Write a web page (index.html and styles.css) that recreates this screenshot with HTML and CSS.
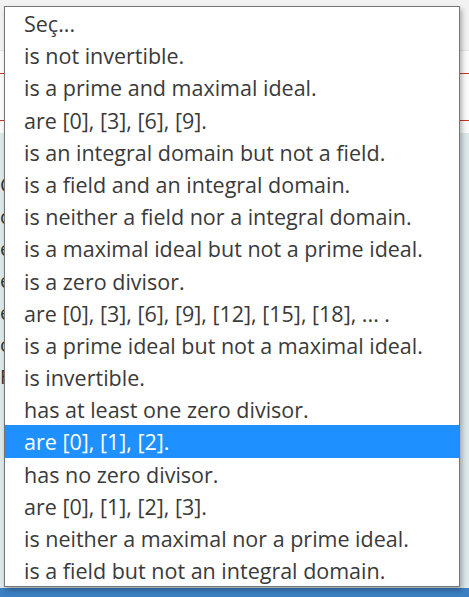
FILE: index.html
```html
<!DOCTYPE html>
<html lang="tr">
<head>
<meta charset="utf-8">
<link rel="stylesheet" href="styles.css">
</head>
<body>
<div class="page">
  <div class="topbar"></div>
  <div class="strip">
    <div class="rule"></div>
    <div class="rule"></div>
  </div>
  <div class="content">
    <p class="line">Cc</p>
    <p class="line">co</p>
    <p class="line">ee</p>
    <p class="line">ee</p>
    <p class="line">ee</p>
    <p class="line">oo</p>
    <p class="line">FF</p>
  </div>
  <div class="footer"><div class="btn"></div></div>
</div>

<div class="dropdown">
  <div class="opt">Seç...</div>
  <div class="opt">is not invertible.</div>
  <div class="opt">is a prime and maximal ideal.</div>
  <div class="opt">are [0], [3], [6], [9].</div>
  <div class="opt">is an integral domain but not a field.</div>
  <div class="opt">is a field and an integral domain.</div>
  <div class="opt">is neither a field nor a integral domain.</div>
  <div class="opt">is a maximal ideal but not a prime ideal.</div>
  <div class="opt">is a zero divisor.</div>
  <div class="opt">are [0], [3], [6], [9], [12], [15], [18], ... .</div>
  <div class="opt">is a prime ideal but not a maximal ideal.</div>
  <div class="opt">is invertible.</div>
  <div class="opt">has at least one zero divisor.</div>
  <div class="opt selected">are [0], [1], [2].</div>
  <div class="opt">has no zero divisor.</div>
  <div class="opt">are [0], [1], [2], [3].</div>
  <div class="opt">is neither a maximal nor a prime ideal.</div>
  <div class="opt">is a field but not an integral domain.</div>
</div>
</body>
</html>
```
FILE: styles.css
```css
html, body {
  margin: 0;
  padding: 0;
  width: 469px;
  height: 597px;
  overflow: hidden;
  font-family: "Open Sans", "Noto Sans", sans-serif;
}
.page {
  display: flex;
  flex-direction: column;
  height: 597px;
  background: #dde8eb;
}
.topbar {
  height: 50px;
  background: #f2f2f2;
  border-bottom: 1px solid #e4e4e4;
  flex: none;
}
.strip {
  height: 82px;
  background: #fbfbfb;
  flex: none;
  display: flex;
  flex-direction: column;
  padding-top: 22px;
  gap: 46px;
  box-sizing: border-box;
}
.rule {
  height: 1px;
  background: #c8341f;
}
.content {
  flex: 1;
  padding: 36px 0 0 0;
  display: flex;
  flex-direction: column;
}
.line {
  margin: 0;
  height: 32px;
  line-height: 32px;
  font-size: 20px;
  color: #333;
}
.footer {
  height: 9px;
  flex: none;
  display: flex;
}
.btn {
  width: 469px;
  background: #3c7fc2;
}
.dropdown {
  position: absolute;
  left: 4px;
  top: 6px;
  width: 454px;
  background: #fff;
  border: 1px solid #767676;
  box-shadow: 2px 3px 5px rgba(0, 0, 0, 0.3);
}
.opt {
  height: 32.2px;
  line-height: 31px;
  padding: 1px 0 0 19px;
  box-sizing: border-box;
  font-size: 21.5px;
  color: #3a3a3a;
  white-space: nowrap;
}
.opt.selected {
  background: #1e90ff;
  color: #fff;
}
```
